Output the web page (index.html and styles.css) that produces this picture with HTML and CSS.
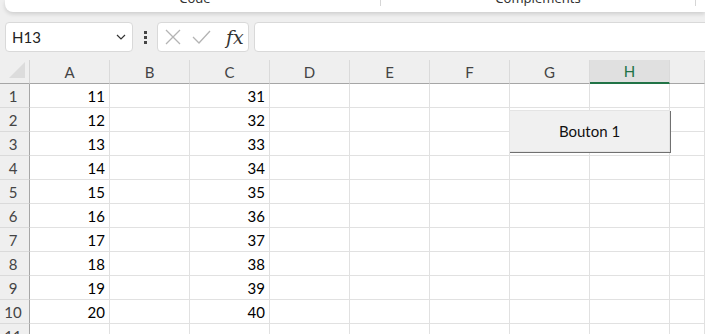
FILE: index.html
```html
<!DOCTYPE html>
<html>
<head>
<link rel="stylesheet" href="styles.css">
</head>
<body>

<div class="ribbon">
  <div class="tab-group code"><span>Code</span></div>
  <div class="tab-group addins"><span>Compléments</span></div>
</div>

<div class="formula-row">
  <div class="name-box">
    <span>H13</span>
    <svg width="10" height="6" viewBox="0 0 10 6"><path d="M1 1 L5 5 L9 1" fill="none" stroke="#333" stroke-width="1.2"/></svg>
  </div>
  <div class="grip"><i></i><i></i><i></i></div>
  <div class="fx-box">
    <svg width="18" height="18" viewBox="0 0 18 18"><path d="M2 2 L16 16 M16 2 L2 16" stroke="#b4b4b4" stroke-width="1.3"/></svg>
    <svg width="19" height="18" viewBox="0 0 19 18"><path d="M1 9 L7 15 L18 3" fill="none" stroke="#b4b4b4" stroke-width="1.3"/></svg>
    <span class="fx">fx</span>
  </div>
  <div class="formula-input"></div>
</div>

<div class="sheet">
  <div class="grid">
    <div class="corner"></div>
    <div class="col-head">A</div><div class="col-head">B</div><div class="col-head">C</div><div class="col-head">D</div>
    <div class="col-head">E</div><div class="col-head">F</div><div class="col-head">G</div><div class="col-head active">H</div><div class="col-head"></div>

    <div class="row-head">1</div><div class="cell">11</div><div class="cell"></div><div class="cell">31</div><div class="cell"></div><div class="cell"></div><div class="cell"></div><div class="cell"></div><div class="cell"></div><div class="cell"></div>
    <div class="row-head">2</div><div class="cell">12</div><div class="cell"></div><div class="cell">32</div><div class="cell"></div><div class="cell"></div><div class="cell"></div><div class="cell"></div><div class="cell"></div><div class="cell"></div>
    <div class="row-head">3</div><div class="cell">13</div><div class="cell"></div><div class="cell">33</div><div class="cell"></div><div class="cell"></div><div class="cell"></div><div class="cell"></div><div class="cell"></div><div class="cell"></div>
    <div class="row-head">4</div><div class="cell">14</div><div class="cell"></div><div class="cell">34</div><div class="cell"></div><div class="cell"></div><div class="cell"></div><div class="cell"></div><div class="cell"></div><div class="cell"></div>
    <div class="row-head">5</div><div class="cell">15</div><div class="cell"></div><div class="cell">35</div><div class="cell"></div><div class="cell"></div><div class="cell"></div><div class="cell"></div><div class="cell"></div><div class="cell"></div>
    <div class="row-head">6</div><div class="cell">16</div><div class="cell"></div><div class="cell">36</div><div class="cell"></div><div class="cell"></div><div class="cell"></div><div class="cell"></div><div class="cell"></div><div class="cell"></div>
    <div class="row-head">7</div><div class="cell">17</div><div class="cell"></div><div class="cell">37</div><div class="cell"></div><div class="cell"></div><div class="cell"></div><div class="cell"></div><div class="cell"></div><div class="cell"></div>
    <div class="row-head">8</div><div class="cell">18</div><div class="cell"></div><div class="cell">38</div><div class="cell"></div><div class="cell"></div><div class="cell"></div><div class="cell"></div><div class="cell"></div><div class="cell"></div>
    <div class="row-head">9</div><div class="cell">19</div><div class="cell"></div><div class="cell">39</div><div class="cell"></div><div class="cell"></div><div class="cell"></div><div class="cell"></div><div class="cell"></div><div class="cell"></div>
    <div class="row-head">10</div><div class="cell">20</div><div class="cell"></div><div class="cell">40</div><div class="cell"></div><div class="cell"></div><div class="cell"></div><div class="cell"></div><div class="cell"></div><div class="cell"></div>
    <div class="row-head">11</div><div class="cell"></div><div class="cell"></div><div class="cell"></div><div class="cell"></div><div class="cell"></div><div class="cell"></div><div class="cell"></div><div class="cell"></div><div class="cell"></div>
  </div>

  <button class="form-button">Bouton 1</button>
</div>

</body>
</html>
```

FILE: styles.css
```css
body {
  margin: 0;
  width: 705px;
  height: 334px;
  overflow: hidden;
  background-color: #efefef;
  font-family: Lato, "Noto Sans", sans-serif;
}

/* ribbon (cut at the top) */
.ribbon {
  display: flex;
  height: 12px;
  margin-left: 5px;
  padding-left: 5px;
  background-color: #fff;
  border-radius: 0 0 0 8px;
  box-shadow: 0 2px 4px rgba(0, 0, 0, 0.14);
  overflow: hidden;
}

.tab-group {
  display: flex;
  justify-content: center;
  border-right: 1px solid #d6d6d6;
  height: 6px;
  font-family: "Noto Sans", sans-serif;
  font-size: 13px;
  color: #333;
}

.tab-group span {
  margin-top: -11px;
  line-height: 18px;
}

.code {
  width: 370px;
}

.addins {
  width: 314px;
}

/* formula bar */
.formula-row {
  display: flex;
  align-items: center;
  height: 30px;
  margin-top: 10px;
  padding-left: 5px;
}

.name-box {
  display: flex;
  align-items: center;
  justify-content: space-between;
  box-sizing: border-box;
  width: 128px;
  height: 30px;
  padding: 0 6px 0 6px;
  background-color: #fff;
  border: 1px solid #d9d9d9;
  border-radius: 4px;
  font-size: 15px;
  color: #222;
}

.grip {
  display: flex;
  flex-direction: column;
  gap: 2px;
  margin: 0 10px 0 11px;
}

.grip i {
  width: 3px;
  height: 3px;
  background-color: #444;
}

.fx-box {
  display: flex;
  align-items: center;
  gap: 10px;
  box-sizing: border-box;
  width: 92px;
  height: 30px;
  padding-left: 6px;
  background-color: #fff;
  border: 1px solid #d9d9d9;
  border-radius: 4px;
}

.fx {
  margin-left: 5px;
  font-family: "DejaVu Serif", serif;
  font-style: italic;
  font-size: 19px;
  color: #333;
}

.formula-input {
  flex: 1;
  height: 30px;
  box-sizing: border-box;
  margin-left: 5px;
  margin-right: -10px;
  background-color: #fff;
  border: 1px solid #d9d9d9;
  border-radius: 4px;
}

/* sheet */
.sheet {
  position: relative;
  margin-top: 8px;
}

.grid {
  display: grid;
  grid-template-columns: 30px repeat(8, 80px) 35px;
  grid-auto-rows: 24px;
}

.corner {
  position: relative;
  box-sizing: border-box;
  border-right: 1px solid #d4d4d4;
  border-bottom: 1px solid #a6a6a6;
}

.corner::after {
  content: "";
  position: absolute;
  right: 4px;
  bottom: 5px;
  border-left: 16px solid transparent;
  border-bottom: 16px solid #dcdcdc;
}

.col-head {
  box-sizing: border-box;
  display: flex;
  align-items: center;
  justify-content: center;
  border-right: 1px solid #dadada;
  border-bottom: 1px solid #a6a6a6;
  font-size: 15px;
  color: #444;
}

.col-head.active {
  background-color: #e0e0e0;
  border-bottom: 2px solid #217346;
  color: #217346;
}

.row-head {
  box-sizing: border-box;
  display: flex;
  align-items: center;
  justify-content: center;
  padding-right: 3px;
  border-right: 1px solid #a6a6a6;
  border-bottom: 1px solid #dadada;
  font-size: 15px;
  color: #444;
}

.cell {
  box-sizing: border-box;
  display: flex;
  align-items: center;
  justify-content: flex-end;
  padding-right: 4px;
  background-color: #fff;
  border-right: 1px solid #e1e1e1;
  border-bottom: 1px solid #e1e1e1;
  font-size: 15px;
  color: #000;
}

.form-button {
  position: absolute;
  left: 509px;
  top: 50px;
  width: 161px;
  height: 42px;
  background-color: #f0f0f0;
  border: 1px solid #e4e4e4;
  box-shadow: 1px 1px 0 #707070;
  font-family: Lato, "Noto Sans", sans-serif;
  font-size: 15px;
  color: #111;
}
```
